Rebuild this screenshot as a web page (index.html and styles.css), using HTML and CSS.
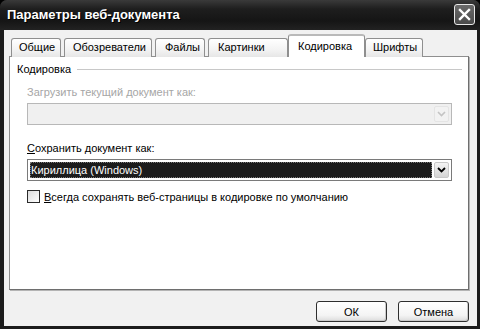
FILE: index.html
```html
<!DOCTYPE html>
<html>
<head>
<meta charset="utf-8">
<title>Параметры веб-документа</title>
<link rel="stylesheet" href="styles.css">
</head>
<body>
<div class="window">
	<div class="titlebar">
		<span class="title">Параметры веб-документа</span>
		<span class="close">
			<svg width="13" height="13" viewBox="0 0 13 13"><path d="M2 2 L11 11 M11 2 L2 11" stroke="#fff" stroke-width="2.4" stroke-linecap="square"/></svg>
		</span>
	</div>
	<div class="client">
		<div class="tabs">
			<div class="tab tab-general">Общие</div>
			<div class="tab tab-browsers">Обозреватели</div>
			<div class="tab tab-files">Файлы</div>
			<div class="tab tab-pictures">Картинки</div>
			<div class="tab active">Кодировка</div>
			<div class="tab tab-fonts">Шрифты</div>
		</div>
		<div class="panel">
			<div class="group-head"><span>Кодировка</span><span class="rule"></span></div>
			<div class="label disabled">Загрузить текущий документ как:</div>
			<div class="select disabled">
				<span class="value"></span>
				<span class="arrow"><svg width="9" height="6" viewBox="0 0 9 6"><path d="M1 1 L4.5 4.5 L8 1" fill="none" stroke="#c4c4c4" stroke-width="1.6"/></svg></span>
			</div>
			<div class="label second"><u>С</u>охранить документ как:</div>
			<div class="select">
				<span class="value selected">Кириллица (Windows)</span>
				<span class="arrow"><svg width="9" height="6" viewBox="0 0 9 6"><path d="M1 1 L4.5 4.5 L8 1" fill="none" stroke="#000" stroke-width="1.8"/></svg></span>
			</div>
			<div class="check-row">
				<span class="checkbox"></span>
				<span><u>В</u>сегда сохранять веб-страницы в кодировке по умолчанию</span>
			</div>
		</div>
		<div class="footer">
			<button class="btn" type="button">ОК</button>
			<button class="btn" type="button">Отмена</button>
		</div>
	</div>
</div>
</body>
</html>
```

FILE: styles.css
```css
* {
	box-sizing: border-box;
}

body {
	margin: 0;
	background: #000;
	font-family: 'Liberation Sans', Arial, sans-serif;
	font-size: 11px;
	color: #000;
}

.window {
	width: 480px;
	height: 329px;
	display: flex;
	flex-direction: column;
	background: #1c1c1c;
	border-radius: 7px 7px 0 0;
	overflow: hidden;
}

.titlebar {
	height: 30px;
	flex: none;
	display: flex;
	align-items: center;
	justify-content: space-between;
	padding: 0 5px 0 7px;
	background: linear-gradient(#3a3a3a, #1e1e1e 30%, #151515 70%, #222);
}

.title {
	color: #fff;
	font-weight: bold;
	font-size: 13px;
	text-shadow: 1px 1px 0 #000;
	padding-bottom: 1px;
}

.close {
	width: 21px;
	height: 21px;
	margin-top: -1px;
	display: flex;
	align-items: center;
	justify-content: center;
	border: 1px solid #e8e8e8;
	border-radius: 3px;
	background: linear-gradient(#6a6a6a, #4a4a4a);
}

.client {
	flex: 1;
	display: flex;
	flex-direction: column;
	margin: 0 3px 3px 4px;
	background: #f1f1f1;
	padding: 5px 8px 0 5px;
}

.tabs {
	display: flex;
	align-items: flex-end;
	gap: 3px;
	padding-left: 2px;
	height: 22px;
	position: relative;
	z-index: 1;
	margin-bottom: -1px;
}

.tab {
	height: 19px;
	padding: 0 0 0 7px;
	line-height: 17px;
	border: 1px solid #8f8f8f;
	border-bottom: none;
	border-radius: 3px 3px 0 0;
	background: linear-gradient(#fff, #f3f3f3 60%, #e6e6e6);
}

.tab-general { width: 50px; }
.tab-browsers { width: 88px; padding-left: 8px; }
.tab-files { width: 50px; padding-left: 9px; }
.tab-pictures { width: 80px; padding-left: 9px; }
.tab-fonts { width: 58px; margin-left: -3px; padding-left: 7px; }

.tab.active {
	width: 77px;
	height: 23px;
	padding-left: 9px;
	line-height: 20px;
	margin-left: -3px;
	background: #fff;
	border-top: 2px solid #b9b9b9;
}

.panel {
	flex: 1;
	background: #fff;
	border: 1px solid #8f8f8f;
	border-right-color: #6e6e6e;
	border-bottom-color: #6e6e6e;
	box-shadow: 1px 1px 0 #b4b4b4;
	padding: 5px 6px 0 7px;
}

.group-head {
	display: flex;
	align-items: center;
	gap: 6px;
	line-height: 14px;
}

.rule {
	flex: 1;
	height: 1px;
	background: #c8c8c8;
	margin-top: 1px;
}

.label {
	margin: 9px 0 0 10px;
	line-height: 14px;
}

.label.second {
	margin-top: 16px;
}

.disabled {
	color: #a6a6a6;
}

.select {
	margin: 4px 10px 0 10px;
	height: 22px;
	display: flex;
	align-items: stretch;
	padding: 2px;
	gap: 2px;
	border: 1px solid #7a7a7a;
	background: #fff;
}

.select.disabled {
	border-color: #b8b8b8;
	background: #f0f0f0;
}

.value {
	flex: 1;
	line-height: 16px;
	padding-left: 1px;
}

.value.selected {
	background: #1c1c1c;
	color: #fff;
	outline: 1px dotted #777;
	outline-offset: -1px;
}

.arrow {
	width: 15px;
	display: flex;
	align-items: center;
	justify-content: center;
	border: 1px solid #c8c8c8;
	border-radius: 2px;
	background: linear-gradient(#f4f4f4, #d4d4d4);
}

.select.disabled .arrow {
	border-color: #e4e4e4;
	background: #f2f2f2;
}

.check-row {
	display: flex;
	align-items: center;
	gap: 4px;
	margin: 9px 0 0 10px;
}

.checkbox {
	width: 13px;
	height: 13px;
	border: 1px solid #2a2a2a;
	background: linear-gradient(135deg, #dcdcdc, #fff);
}

.footer {
	height: 36px;
	flex: none;
	display: flex;
	justify-content: flex-end;
	gap: 11px;
	padding-top: 11px;
}

.btn {
	width: 71px;
	height: 21px;
	padding: 0;
	font-family: inherit;
	font-size: 11px;
	color: #000;
	border: 1px solid #2e2e2e;
	border-radius: 3px;
	background: linear-gradient(#fff, #f4f4f4 70%, #dcdcdc);
	box-shadow: inset -1px -1px 0 #c9c9c9;
}
```
